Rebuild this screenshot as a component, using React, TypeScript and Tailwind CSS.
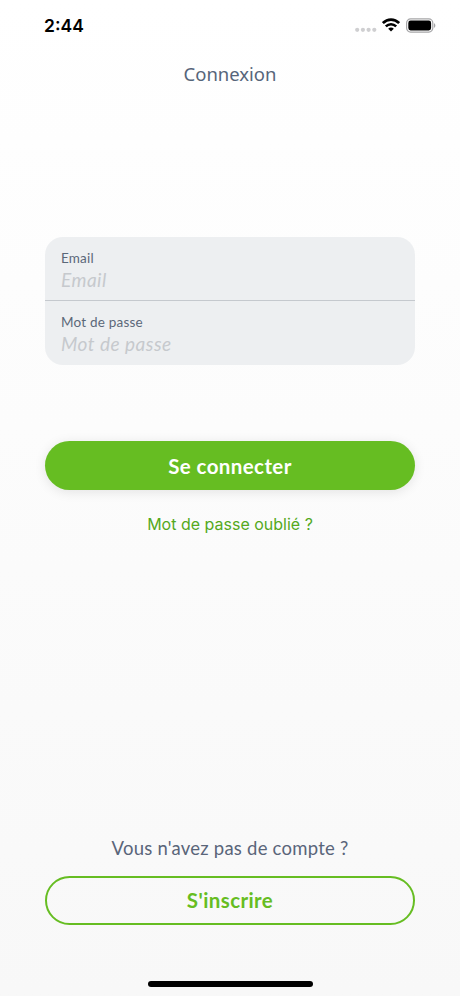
import { useState } from 'react';

interface FieldProps {
  id: string;
  label: string;
  type: string;
  className: string;
}

function StatusBar() {
  return (
    <div className="flex h-[50px] items-center justify-between pl-11 pr-6">
      <span className="pt-px font-['Inter'] text-[17.5px] font-semibold leading-6 text-black">2:44</span>
      <div className="flex items-center">
        <svg width="22" height="14" viewBox="0 0 22 14" fill="#cfcfd1" aria-hidden="true">
          <circle cx="2.2" cy="11.8" r="2.1" />
          <circle cx="7.9" cy="11.8" r="2.1" />
          <circle cx="13.6" cy="11.8" r="2.1" />
          <circle cx="19.3" cy="11.8" r="2.1" />
        </svg>
        <svg className="ml-[5px]" width="18" height="14" viewBox="0 0 18 14" aria-hidden="true">
          <path d="M0.9 5.1 C5.5 0.5 12.5 0.5 17.1 5.1" fill="none" stroke="#000" strokeWidth="2.7" />
          <path d="M3.8 8.4 C6.8 5.5 11.2 5.5 14.2 8.4" fill="none" stroke="#000" strokeWidth="2.6" />
          <path d="M6.2 10.7 C7.8 9.2 10.2 9.2 11.8 10.7 L9 13.6 Z" fill="#000" />
        </svg>
        <svg className="ml-1.5" width="30" height="15" viewBox="0 0 30 15" aria-hidden="true">
          <rect x="0.6" y="0.9" width="26.2" height="13.2" rx="4" fill="none" stroke="#a6a6a8" strokeWidth="1.2" />
          <rect x="2.3" y="2.6" width="22.8" height="9.8" rx="2.3" fill="#000" />
          <path d="M28 5.2 C29.8 5.8 29.8 9.2 28 9.8 Z" fill="#a6a6a8" />
        </svg>
      </div>
    </div>
  );
}

function Field({ id, label, type, className }: FieldProps) {
  const [value, setValue] = useState('');

  return (
    <div className={`flex flex-col px-4 ${className}`}>
      <label htmlFor={id} className="text-[13.5px] leading-[18px] tracking-[0.2px] text-[#5b6879]">
        {label}
      </label>
      <input
        id={id}
        type={type}
        value={value}
        placeholder={label}
        onChange={(e) => setValue(e.target.value)}
        className="mt-px h-6 w-full bg-transparent text-[19px] leading-6 tracking-[0.5px] text-[#5b6879] outline-none placeholder:italic placeholder:text-[#c6c9cd]"
      />
    </div>
  );
}

export default function App() {
  return (
    <main className="flex h-[996px] w-full flex-col overflow-hidden bg-linear-to-b from-white to-[#f8f8f8] font-['Lato',sans-serif]">
      <StatusBar />

      <h1 className="mt-3 text-center font-['Noto_Sans'] text-[18.5px] font-normal leading-6 text-[#56657a]">
        Connexion
      </h1>

      <form className="px-[45px] pt-[151px]" onSubmit={(e) => e.preventDefault()}>
        <div className="overflow-hidden rounded-[18px] bg-[#edeff1]">
          <Field id="email" label="Email" type="email" className="h-16 border-b border-[#c5c9ce] pt-3" />
          <Field id="password" label="Mot de passe" type="password" className="h-16 pt-3" />
        </div>
        <button
          type="submit"
          className="mt-[76px] h-[49px] w-full rounded-full bg-[#66bd22] pt-0.5 text-[20.5px] font-bold tracking-[0.4px] text-white shadow-[0_2px_12px_rgba(0,0,0,0.1)]"
        >
          Se connecter
        </button>
      </form>

      <a href="#" className="mt-[22px] self-center font-['Inter'] text-[16px] leading-6 text-[#54a91c]">
        Mot de passe oublié ?
      </a>

      <section className="mt-auto px-[45px] text-center">
        <p className="text-[18.5px] leading-6 tracking-[0.23px] text-[#596579]">Vous n'avez pas de compte ?</p>
        <button
          type="button"
          className="mt-4 h-[49px] w-full rounded-full border-2 border-[#66bd22] text-[20.5px] font-bold tracking-[0.4px] text-[#66bd22]"
        >
          S'inscrire
        </button>
      </section>

      <div className="mb-[9px] mt-14 h-[6px] w-[165px] shrink-0 self-center rounded-full bg-black" />
    </main>
  );
}
